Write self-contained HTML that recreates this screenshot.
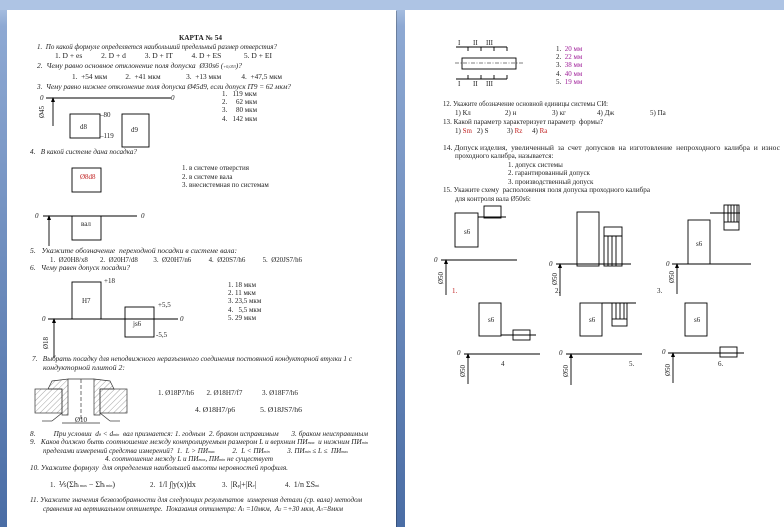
<!DOCTYPE html>
<html><head><meta charset="utf-8"><style>
html,body{margin:0;padding:0;width:784px;height:527px;overflow:hidden;background:#5b7db3}
svg{display:block}
text{font-family:"Liberation Serif",serif;font-size:7px;fill:#222;white-space:pre}
.i{font-style:italic}
.r{fill:#c02020}
.m{fill:#a0209a}
</style></head><body>
<svg width="784" height="527" viewBox="0 0 784 527" xmlns="http://www.w3.org/2000/svg" xml:space="preserve">
<defs>
<linearGradient id="bg" x1="0" y1="0" x2="0" y2="1"><stop offset="0" stop-color="#b3c8e6"/><stop offset="0.05" stop-color="#8ea9d3"/><stop offset="1" stop-color="#4a6da5"/></linearGradient>
<pattern id="h" width="4" height="4" patternUnits="userSpaceOnUse" patternTransform="rotate(45)"><line x1="0" y1="0" x2="0" y2="4" stroke="#666" stroke-width="0.6"/></pattern>
</defs>
<rect width="784" height="527" fill="url(#bg)"/>
<rect x="0" y="0" width="784" height="10" fill="#aec4e4"/>
<rect x="8" y="11" width="389" height="516" fill="#000" opacity="0.25"/>
<rect x="7" y="10" width="389" height="517" fill="#fff"/>
<rect x="406" y="11" width="378" height="516" fill="#000" opacity="0.25"/>
<rect x="405" y="10" width="379" height="517" fill="#fff"/>

<!-- PAGE 1 -->
<text x="179" y="40" font-weight="bold" textLength="43" lengthAdjust="spacingAndGlyphs">КАРТА № 54</text>
<text x="37" y="49" class="i" textLength="240" lengthAdjust="spacingAndGlyphs">1.  По какой формуле определяется наибольший предельный размер отверстия?</text>
<text x="55" y="58" textLength="217" lengthAdjust="spacingAndGlyphs">1. D + es          2. D + d          3. D + IT          4. D + ES            5. D + EI</text>
<text x="37" y="68" class="i" textLength="205" lengthAdjust="spacingAndGlyphs">2.  Чему равно основное отклонение поля допуска  Ø30s6 (<tspan font-size="4">+0,053</tspan>)?</text>
<text x="72" y="79" textLength="210" lengthAdjust="spacingAndGlyphs">1.  +54 мкм          2.  +41 мкм              3.  +13 мкм           4.  +47,5 мкм</text>
<text x="37" y="89" class="i" textLength="254" lengthAdjust="spacingAndGlyphs">3.  Чему равно нижнее отклонение поля допуска Ø45d9, если допуск IT9 = 62 мкм?</text>
<g stroke="#000" stroke-width="0.9" fill="none">
<line x1="46" y1="98" x2="171" y2="98"/>
<line x1="53" y1="98" x2="53" y2="126"/>
<rect x="70" y="114" width="30" height="24"/>
<rect x="122" y="114" width="27" height="33"/>
</g>
<polygon points="53,97 51,102 55,102" fill="#000"/>
<text x="40" y="100" class="i">0</text><text x="171" y="100" class="i">0</text>
<text transform="translate(44,118) rotate(-90)">Ø45</text>
<text x="80" y="129">d8</text><text x="131" y="132">d9</text>
<text x="100" y="117">–80</text><text x="100" y="138">–119</text>
<text x="222" y="96">1.   119 мкм</text><text x="222" y="104">2.     62 мкм</text><text x="222" y="112">3.     80 мкм</text><text x="222" y="121">4.   142 мкм</text>
<text x="30" y="154" class="i" textLength="107" lengthAdjust="spacingAndGlyphs">4.   В какой системе дана посадка?</text>
<rect x="72" y="168" width="29" height="24" fill="none" stroke="#000" stroke-width="0.9"/>
<text x="80" y="179" class="r">Ø8d8</text>
<text x="182" y="170">1. в системе отверстия</text><text x="182" y="179">2. в системе вала</text><text x="182" y="187">3. внесистемная по системам</text>
<g stroke="#000" stroke-width="0.9" fill="none">
<line x1="43" y1="216" x2="137" y2="216"/>
<line x1="49" y1="216" x2="49" y2="246"/>
<rect x="72" y="216" width="29" height="24"/>
</g>
<polygon points="49,215 47,220 51,220" fill="#000"/>
<text x="35" y="218" class="i">0</text><text x="141" y="218" class="i">0</text>
<text x="81" y="226">вал</text>
<text x="30" y="253" class="i" textLength="207" lengthAdjust="spacingAndGlyphs">5.   Укажите обозначение  переходной посадки в системе вала:</text>
<text x="50" y="262" textLength="252" lengthAdjust="spacingAndGlyphs">1.  Ø20H8/x8       2.  Ø20H7/d8         3.  Ø20H7/n6          4.  Ø20S7/h6          5.  Ø20JS7/h6</text>
<text x="30" y="270" class="i" textLength="100" lengthAdjust="spacingAndGlyphs">6.   Чему равен допуск посадки?</text>
<g stroke="#000" stroke-width="0.9" fill="none">
<line x1="48" y1="319" x2="178" y2="319"/>
<line x1="54" y1="319" x2="54" y2="358"/>
<rect x="72" y="282" width="29" height="37"/>
<rect x="125" y="307" width="29" height="30"/>
</g>
<polygon points="54,318 52,323 56,323" fill="#000"/>
<text x="82" y="303">H7</text><text x="133" y="326">js6</text>
<text x="104" y="283">+18</text><text x="158" y="307">+5,5</text><text x="156" y="337">-5,5</text>
<text x="42" y="321" class="i">0</text><text x="180" y="321" class="i">0</text>
<text transform="translate(48,349) rotate(-90)">Ø18</text>
<text x="228" y="287">1. 18 мкм</text><text x="228" y="295">2. 11 мкм</text><text x="228" y="303">3. 23,5 мкм</text><text x="228" y="312">4.   5,5 мкм</text><text x="228" y="320">5. 29 мкм</text>
<text x="32" y="361" class="i" textLength="320" lengthAdjust="spacingAndGlyphs">7.   Выбрать посадку для неподвижного неразъемного соединения постоянной кондукторной втулки 1 с</text>
<text x="43" y="370" class="i" textLength="82" lengthAdjust="spacingAndGlyphs">кондукторной плитой 2:</text>
<g stroke="#333" stroke-width="0.7">
<rect x="35" y="389" width="27" height="24" fill="url(#h)"/>
<rect x="100" y="389" width="27" height="24" fill="url(#h)"/>
<path d="M48,389 L52,381 L68,379 L68,415 L62,415 L62,389 Z" fill="url(#h)"/>
<path d="M94,379 L110,381 L114,389 L100,389 L100,415 L94,415 Z" fill="url(#h)"/>
<line x1="68" y1="379" x2="94" y2="379"/>
<line x1="81" y1="379" x2="81" y2="420" stroke-dasharray="4,2"/>
<line x1="62" y1="413" x2="52" y2="421"/><line x1="52" y1="421" x2="42" y2="421"/>
<line x1="100" y1="413" x2="110" y2="421"/><line x1="110" y1="421" x2="120" y2="421"/>
<line x1="62" y1="423" x2="100" y2="423"/>
</g>
<text x="75" y="422" font-size="5">Ø10</text>
<text x="158" y="395" textLength="140" lengthAdjust="spacingAndGlyphs">1. Ø18P7/h6       2. Ø18H7/f7           3. Ø18F7/h6</text>
<text x="195" y="412" textLength="107" lengthAdjust="spacingAndGlyphs">4. Ø18H7/p6             5. Ø18JS7/h6</text>
<text x="30" y="436" class="i" textLength="338" lengthAdjust="spacingAndGlyphs">8.          При условии  d<tspan font-size="4">д</tspan> &lt; d<tspan font-size="4">min</tspan>  вал признается: 1. годным  2. браком исправимым       3. браком неисправимым</text>
<text x="30" y="444" class="i" textLength="338" lengthAdjust="spacingAndGlyphs">9.   Каков должно быть соотношение между контролируемым размером L и верхним ПИ<tspan font-size="4">max</tspan>  и нижним ПИ<tspan font-size="4">min</tspan></text>
<text x="43" y="453" class="i" textLength="305" lengthAdjust="spacingAndGlyphs">пределами измерений средства измерений?  1.  L &gt; ПИ<tspan font-size="4">max</tspan>          2.  L &lt; ПИ<tspan font-size="4">min</tspan>          3. ПИ<tspan font-size="4">min</tspan> ≤ L ≤  ПИ<tspan font-size="4">max</tspan></text>
<text x="105" y="461" class="i" textLength="168" lengthAdjust="spacingAndGlyphs">4. соотношение между L и ПИ<tspan font-size="4">max</tspan>, ПИ<tspan font-size="4">min</tspan> не существует</text>
<text x="30" y="470" class="i" textLength="258" lengthAdjust="spacingAndGlyphs">10. Укажите формулу  для определения наибольшей высоты неровностей профиля.</text>
<text x="50" y="487">1.  <tspan font-size="8">⅕(Σh</tspan><tspan font-size="4">i max</tspan><tspan font-size="8"> − Σh</tspan><tspan font-size="4">i min</tspan><tspan font-size="8">)</tspan></text>
<text x="150" y="487">2.  <tspan font-size="8">1/l ∫|y(x)|dx</tspan></text>
<text x="222" y="487">3.  <tspan font-size="8">|R<tspan font-size="4">p</tspan>|+|R<tspan font-size="4">v</tspan>|</tspan></text>
<text x="285" y="487">4.  <tspan font-size="8">1/n ΣS<tspan font-size="4">mi</tspan></tspan></text>
<text x="30" y="502" class="i" textLength="332" lengthAdjust="spacingAndGlyphs">11. Укажите значения безвозобранности для следующих результатов  измерения детали (ср. вала) методом</text>
<text x="43" y="511" class="i" textLength="300" lengthAdjust="spacingAndGlyphs">сравнения на вертикальном оптиметре.  Показания оптиметра: A<tspan font-size="4">1</tspan> =10мкм,  A<tspan font-size="4">2</tspan> =+30 мкм, A<tspan font-size="4">3</tspan>=8мкм</text>

<!-- PAGE 2 -->
<g stroke="#000" stroke-width="0.9" fill="none">
<rect x="462" y="58" width="54" height="11"/>
<line x1="455" y1="63" x2="524" y2="63" stroke-dasharray="4,1.5,1,1.5" stroke-width="0.6"/>
<line x1="456" y1="47" x2="507" y2="47"/>
<line x1="456" y1="79" x2="507" y2="79"/>
<line x1="468" y1="47" x2="468" y2="51"/><line x1="481" y1="47" x2="481" y2="51"/><line x1="494" y1="47" x2="494" y2="51"/><line x1="507" y1="47" x2="507" y2="51"/>
<line x1="468" y1="75" x2="468" y2="79"/><line x1="481" y1="75" x2="481" y2="79"/><line x1="494" y1="75" x2="494" y2="79"/><line x1="507" y1="75" x2="507" y2="79"/>
</g>
<text x="458" y="45" font-size="5">I</text><text x="473" y="45" font-size="5">II</text><text x="486" y="45" font-size="5">III</text>
<text x="458" y="86" font-size="5">I</text><text x="473" y="86" font-size="5">II</text><text x="486" y="86" font-size="5">III</text>
<text x="556" y="51">1.  <tspan class="m">20 мм</tspan></text><text x="556" y="59">2.  <tspan class="m">22 мм</tspan></text><text x="556" y="67">3.  <tspan class="m">38 мм</tspan></text><text x="556" y="76">4.  <tspan class="m">40 мм</tspan></text><text x="556" y="84">5.  <tspan class="m">19 мм</tspan></text>
<text x="443" y="106" textLength="165" lengthAdjust="spacingAndGlyphs">12. Укажите обозначение основной единицы системы СИ:</text>
<text x="455" y="115">1) Кл</text><text x="505" y="115">2) н</text><text x="552" y="115">3) кг</text><text x="597" y="115">4) Дж</text><text x="650" y="115">5) Па</text>
<text x="443" y="124" textLength="160" lengthAdjust="spacingAndGlyphs">13. Какой параметр характеризует параметр  формы?</text>
<text x="455" y="133">1) <tspan class="r">Sm</tspan></text><text x="477" y="133">2) S</text><text x="507" y="133">3) <tspan class="r">Rz</tspan></text><text x="532" y="133">4) <tspan class="r">Ra</tspan></text>
<text x="443" y="150" textLength="337" lengthAdjust="spacingAndGlyphs">14. Допуск изделия,  увеличенный  за  счет  допусков  на  изготовление  непроходного  калибра  и  износ</text>
<text x="455" y="158">проходного калибра, называется:</text>
<text x="508" y="167">1. допуск системы</text><text x="508" y="175">2. гарантированный допуск</text><text x="508" y="184">3. производственный допуск</text>
<text x="443" y="192" textLength="207" lengthAdjust="spacingAndGlyphs">15. Укажите схему  расположения поля допуска проходного калибра</text>
<text x="455" y="201">для контроля вала Ø50s6:</text>
<g stroke="#000" stroke-width="0.9" fill="none">
<rect x="455" y="213" width="23" height="34"/><line x1="478" y1="217" x2="506" y2="217"/><rect x="484" y="206" width="17" height="12"/>
<line x1="441" y1="260" x2="517" y2="260"/><line x1="446" y1="260" x2="446" y2="295"/>
<rect x="577" y="212" width="22" height="54"/><rect x="604" y="227" width="18" height="39"/><line x1="604" y1="236" x2="622" y2="236"/>
<line x1="608" y1="236" x2="608" y2="266"/><line x1="612" y1="236" x2="612" y2="266"/><line x1="616" y1="236" x2="616" y2="266"/>
<line x1="556" y1="264" x2="631" y2="264"/><line x1="560" y1="264" x2="560" y2="296"/>
<rect x="688" y="220" width="22" height="44"/><line x1="710" y1="213" x2="740" y2="213"/><rect x="724" y="205" width="15" height="25"/><line x1="724" y1="222" x2="739" y2="222"/>
<line x1="728" y1="205" x2="728" y2="222"/><line x1="731" y1="205" x2="731" y2="222"/><line x1="734" y1="205" x2="734" y2="222"/><line x1="737" y1="205" x2="737" y2="222"/>
<line x1="672" y1="264" x2="751" y2="264"/><line x1="677" y1="264" x2="677" y2="294"/>
<rect x="479" y="303" width="22" height="33"/><line x1="501" y1="335" x2="536" y2="335"/><rect x="513" y="330" width="17" height="10"/>
<line x1="464" y1="354" x2="540" y2="354"/><line x1="468" y1="354" x2="468" y2="384"/>
<rect x="580" y="303" width="22" height="33"/><line x1="602" y1="303" x2="636" y2="303"/><rect x="612" y="303" width="15" height="23"/><line x1="612" y1="319" x2="627" y2="319"/>
<line x1="616" y1="303" x2="616" y2="319"/><line x1="620" y1="303" x2="620" y2="319"/><line x1="624" y1="303" x2="624" y2="319"/>
<line x1="566" y1="354" x2="642" y2="354"/><line x1="571" y1="354" x2="571" y2="385"/>
<rect x="685" y="303" width="22" height="33"/><line x1="668" y1="353" x2="744" y2="353"/><rect x="720" y="347" width="17" height="10"/>
<line x1="673" y1="353" x2="673" y2="383"/>
</g>
<g fill="#000">
<polygon points="446,259 444,264 448,264"/><polygon points="560,263 558,268 562,268"/><polygon points="677,263 675,268 679,268"/>
<polygon points="468,353 466,358 470,358"/><polygon points="571,353 569,358 573,358"/><polygon points="673,352 671,357 675,357"/>
</g>
<g font-size="5">
<text x="464" y="234">s6</text><text x="696" y="246">s6</text><text x="488" y="322">s6</text><text x="589" y="322">s6</text><text x="694" y="322">s6</text>
</g>
<text x="434" y="262" class="i">0</text><text x="549" y="266" class="i">0</text><text x="666" y="266" class="i">0</text>
<text x="457" y="355" class="i">0</text><text x="559" y="355" class="i">0</text><text x="662" y="354" class="i">0</text>
<g font-size="5.5">
<text transform="translate(443,284) rotate(-90)">Ø50</text><text transform="translate(557,285) rotate(-90)">Ø50</text><text transform="translate(674,283) rotate(-90)">Ø50</text>
<text transform="translate(465,377) rotate(-90)">Ø50</text><text transform="translate(568,377) rotate(-90)">Ø50</text><text transform="translate(670,376) rotate(-90)">Ø50</text>
</g>
<text x="452" y="293" class="r">1.</text><text x="555" y="293">2.</text><text x="657" y="293">3.</text>
<text x="501" y="366">4</text><text x="629" y="366">5.</text><text x="718" y="366">6.</text>
</svg>
</body></html>
